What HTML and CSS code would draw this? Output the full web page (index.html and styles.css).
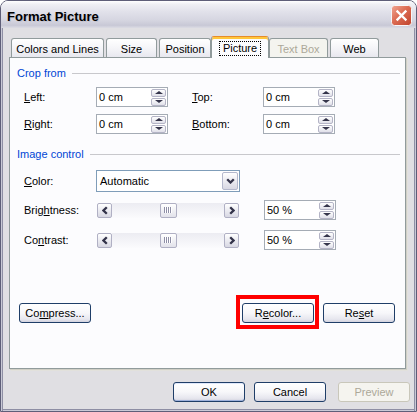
FILE: index.html
```html
<!DOCTYPE html>
<html>
<head>
<meta charset="utf-8">
<title>Format Picture</title>
<link rel="stylesheet" href="styles.css">
</head>
<body>
<div class="window">
  <div class="titlebar">
    <span class="title">Format Picture</span>
    <span class="close">
      <svg width="21" height="21" viewBox="0 0 21 21">
        <defs>
          <linearGradient id="cg" x1="0" y1="0" x2="1" y2="1">
            <stop offset="0" stop-color="#f1a894"/>
            <stop offset="0.45" stop-color="#dc6c53"/>
            <stop offset="1" stop-color="#c0422c"/>
          </linearGradient>
        </defs>
        <rect x="0.5" y="0.5" width="20" height="20" rx="3" fill="url(#cg)" stroke="#f6f6f8"/>
        <path d="M6.5 6.5L14.5 14.5M14.5 6.5L6.5 14.5" stroke="#fff" stroke-width="2.4" stroke-linecap="square"/>
      </svg>
    </span>
  </div>
  <div class="body">
    <div class="tabs">
      <div class="tab t1">Colors and Lines</div>
      <div class="tab t2">Size</div>
      <div class="tab t3">Position</div>
      <div class="tab sel t4"><span class="focus">Picture</span></div>
      <div class="tab dis t5">Text Box</div>
      <div class="tab t6">Web</div>
    </div>
    <div class="panel">
      <div class="group"><span>Crop from</span><i></i></div>
      <div class="crop">
        <div class="row">
          <span class="lbl"><u>L</u>eft:</span>
          <div class="num"><span>0 cm</span><div class="spin"><b class="up"></b><b class="dn"></b></div></div>
          <span class="lbl lbl2"><u>T</u>op:</span>
          <div class="num"><span>0 cm</span><div class="spin"><b class="up"></b><b class="dn"></b></div></div>
        </div>
        <div class="row">
          <span class="lbl"><u>R</u>ight:</span>
          <div class="num"><span>0 cm</span><div class="spin"><b class="up"></b><b class="dn"></b></div></div>
          <span class="lbl lbl2"><u>B</u>ottom:</span>
          <div class="num"><span>0 cm</span><div class="spin"><b class="up"></b><b class="dn"></b></div></div>
        </div>
      </div>
      <div class="group group2"><span>Image control</span><i></i></div>
      <div class="image">
        <div class="row rcolor">
          <span class="lbl"><u>C</u>olor:</span>
          <div class="combo"><span>Automatic</span>
            <div class="dropbtn"><svg width="9" height="6" viewBox="0 0 9 6"><path d="M1.2 1.2L4.5 4.5L7.8 1.2" fill="none" stroke="#34344a" stroke-width="2.3"/></svg></div>
          </div>
        </div>
        <div class="row rbright">
          <span class="lbl">Brig<u>h</u>tness:</span>
          <div class="ctl">
            <div class="hscroll">
              <div class="sbtn"><svg width="6" height="9" viewBox="0 0 6 9"><path d="M4.8 1.2L1.5 4.5L4.8 7.8" fill="none" stroke="#34344a" stroke-width="2.3"/></svg></div>
              <div class="track"><div class="thumb"><i></i></div></div>
              <div class="sbtn"><svg width="6" height="9" viewBox="0 0 6 9"><path d="M1.2 1.2L4.5 4.5L1.2 7.8" fill="none" stroke="#34344a" stroke-width="2.3"/></svg></div>
            </div>
          </div>
          <div class="num"><span>50 %</span><div class="spin"><b class="up"></b><b class="dn"></b></div></div>
        </div>
        <div class="row rcontrast">
          <span class="lbl">Co<u>n</u>trast:</span>
          <div class="ctl">
            <div class="hscroll">
              <div class="sbtn"><svg width="6" height="9" viewBox="0 0 6 9"><path d="M4.8 1.2L1.5 4.5L4.8 7.8" fill="none" stroke="#34344a" stroke-width="2.3"/></svg></div>
              <div class="track"><div class="thumb"><i></i></div></div>
              <div class="sbtn"><svg width="6" height="9" viewBox="0 0 6 9"><path d="M1.2 1.2L4.5 4.5L1.2 7.8" fill="none" stroke="#34344a" stroke-width="2.3"/></svg></div>
            </div>
          </div>
          <div class="num"><span>50 %</span><div class="spin"><b class="up"></b><b class="dn"></b></div></div>
        </div>
      </div>
      <div class="actions">
        <div class="btn">Co<u>m</u>press...</div>
        <div class="hlwrap">
          <div class="btn">R<u>e</u>color...</div>
          <div class="hl"></div>
        </div>
        <div class="btn reset">Re<u>s</u>et</div>
      </div>
    </div>
    <div class="footer">
      <div class="btn default">OK</div>
      <div class="btn cancel">Cancel</div>
      <div class="btn disabled preview">Preview</div>
    </div>
  </div>
</div>
</body>
</html>
```
FILE: styles.css
```css
html, body {
  margin: 0;
  padding: 0;
  background: #ffffff;
}

.window {
  width: 417px;
  height: 412px;
  box-sizing: border-box;
  border: 1px solid #5e5e78;
  border-radius: 8px 8px 0 0;
  display: flex;
  flex-direction: column;
  overflow: hidden;
  font-family: "Liberation Sans", Arial, sans-serif;
  font-size: 11px;
  color: #000;
}

.titlebar {
  height: 27px;
  flex: none;
  display: flex;
  align-items: flex-start;
  justify-content: space-between;
  background: linear-gradient(to bottom, #ffffff 0%, #efeff4 12%, #e1e1ea 40%, #d6d6e1 70%, #c8c8d6 90%, #dcdce4 100%);
}

.title {
  font-weight: bold;
  font-size: 13px;
  line-height: 15px;
  margin: 8px 0 0 6px;
  color: #000;
  text-shadow: 1px 1px 0 #c4c4d0;
}

.close {
  width: 21px;
  height: 21px;
  margin: 4px 4px 0 0;
  display: block;
}

.close svg {
  display: block;
}

.body {
  flex: 1;
  display: flex;
  flex-direction: column;
  background: #e0dfe3;
  padding: 8px 0 0 8px;
  box-shadow: inset 1px 0 #c9c9d6, inset 2px 0 #8e8ea4, inset -1px 0 #c9c9d6, inset -2px 0 #8e8ea4, inset 0 -1px #c9c9d6, inset 0 -2px #8e8ea4;
}

/* Tabs */
.tabs {
  display: flex;
  align-items: flex-end;
  height: 21px;
  padding-left: 2px;
  position: relative;
  z-index: 1;
}

.tab {
  height: 19px;
  box-sizing: border-box;
  border: 1px solid #919b9c;
  border-bottom: none;
  border-radius: 3px 3px 0 0;
  background: linear-gradient(to bottom, #ffffff 0%, #f6f6f9 45%, #e8e8ef 100%);
  display: flex;
  align-items: center;
  justify-content: center;
  padding-top: 2px;
  margin-right: 2px;
  white-space: nowrap;
}

.t1 { width: 93px; }
.t2 { width: 51px; }
.t3 { width: 52px; margin-right: 0; }
.t5 { width: 59px; }
.t6 { width: 49px; }

.tab.sel {
  width: 58px;
  height: 22px;
  margin-right: 0;
  margin-bottom: -1px;
  background: #fcfcfe;
  border-top: 1px solid #e68b2c;
  box-shadow: inset 0 2px 0 #ffc73c;
  padding-top: 1px;
}

.focus {
  border: 1px dotted #000;
  padding: 0 3px;
  line-height: 13px;
}

.tab.dis {
  background: #f4f4ef;
  color: #aca899;
}

/* Panel */
.panel {
  width: 397px;
  height: 312px;
  box-sizing: border-box;
  border: 1px solid #919b9c;
  background: #fcfcfe;
  box-shadow: 1px 1px 0 #d0cfc6, 2px 2px 0 #e2e1dc;
  display: flex;
  flex-direction: column;
  flex: none;
}

.group {
  display: flex;
  align-items: center;
  height: 14px;
  margin: 8px 5px 0 7px;
  gap: 6px;
  color: #0046d5;
}

.group i {
  flex: 1;
  height: 1px;
  background: #c8c8cc;
}

.group2 {
  margin-top: 13px;
}

.crop {
  display: flex;
  flex-direction: column;
  gap: 7px;
  margin: 7px 0 0 14px;
}

.row {
  display: flex;
  align-items: center;
}

.lbl {
  width: 72px;
  flex: none;
  white-space: nowrap;
}

.lbl2 {
  width: 71px;
  margin-left: 24px;
}

.num {
  width: 72px;
  height: 20px;
  box-sizing: border-box;
  border: 1px solid #a5acb5;
  background: #ffffff;
  display: flex;
  align-items: center;
  justify-content: space-between;
  padding: 0 1px 0 2px;
  flex: none;
}

.spin {
  width: 15px;
  height: 17px;
  display: flex;
  flex-direction: column;
  gap: 1px;
}

.spin b {
  flex: 1;
  box-sizing: border-box;
  border: 1px solid #b4b4c6;
  border-radius: 2px;
  background: linear-gradient(to bottom, #ffffff, #e0e0e9);
  display: flex;
  align-items: center;
  justify-content: center;
}

.spin .up::after,
.spin .dn::after {
  content: "";
  width: 0;
  height: 0;
  border-left: 4px solid transparent;
  border-right: 4px solid transparent;
}

.spin .up::after {
  border-bottom: 3px solid #34344a;
}

.spin .dn::after {
  border-top: 3px solid #34344a;
}

/* Image control */
.image {
  display: flex;
  flex-direction: column;
  margin: 9px 0 0 14px;
}

.rbright {
  margin-top: 8px;
}

.rcontrast {
  margin-top: 10px;
}

.combo {
  width: 144px;
  height: 22px;
  box-sizing: border-box;
  border: 1px solid #7f9db9;
  background: #ffffff;
  display: flex;
  align-items: center;
  justify-content: space-between;
  padding: 0 1px 0 3px;
}

.dropbtn {
  width: 16px;
  height: 18px;
  box-sizing: border-box;
  border: 1px solid #b4b8cc;
  border-radius: 2px;
  background: linear-gradient(to bottom, #ffffff, #d8d8e3);
  display: flex;
  align-items: center;
  justify-content: center;
}

.dropbtn svg,
.sbtn svg {
  display: block;
}

.ctl {
  width: 168px;
  flex: none;
}

.hscroll {
  width: 142px;
  height: 15px;
  margin-left: 1px;
  display: flex;
}

.sbtn {
  width: 15px;
  height: 15px;
  box-sizing: border-box;
  border: 1px solid #b0b0c4;
  border-radius: 2px;
  background: linear-gradient(to bottom, #ffffff, #d8d8e3);
  display: flex;
  align-items: center;
  justify-content: center;
  flex: none;
}

.track {
  flex: 1;
  background: linear-gradient(to bottom, #ececf2, #fbfbfd);
  display: flex;
  justify-content: center;
}

.thumb {
  width: 17px;
  height: 15px;
  box-sizing: border-box;
  border: 1px solid #b0b0c4;
  border-radius: 2px;
  background: linear-gradient(to bottom, #ffffff, #e2e2ea);
  display: flex;
  align-items: center;
  justify-content: center;
}

.thumb i {
  width: 8px;
  height: 6px;
  background: repeating-linear-gradient(to right, #8e8ea6 0 1px, #ffffff 1px 2px);
}

/* Buttons */
.btn {
  width: 72px;
  height: 20px;
  box-sizing: border-box;
  border: 1px solid #1f3e68;
  border-radius: 3px;
  background: linear-gradient(to bottom, #ffffff 0%, #f7f7fa 50%, #e6e6ee 85%, #d2d2de 100%);
  display: flex;
  align-items: center;
  justify-content: center;
  flex: none;
  white-space: nowrap;
}

.actions {
  display: flex;
  align-items: center;
  margin-top: 53px;
  padding: 0 10px 0 9px;
}

.hlwrap {
  position: relative;
  margin-left: auto;
}

.hl {
  position: absolute;
  left: -6px;
  top: -8px;
  right: -5px;
  bottom: -6px;
  border: 4px solid #ff0000;
}

.reset {
  margin-left: 9px;
}

.footer {
  display: flex;
  margin: 13px 0 0 164px;
}

.btn.default {
  box-shadow: inset 0 -1px 0 #9fb2dc, inset 0 1px 0 #dfe8fb;
}

.cancel {
  margin-left: 9px;
}

.preview {
  margin-left: 12px;
}

.btn.disabled {
  border-color: #c9c7ba;
  background: #f5f4ef;
  color: #aca899;
}
```
